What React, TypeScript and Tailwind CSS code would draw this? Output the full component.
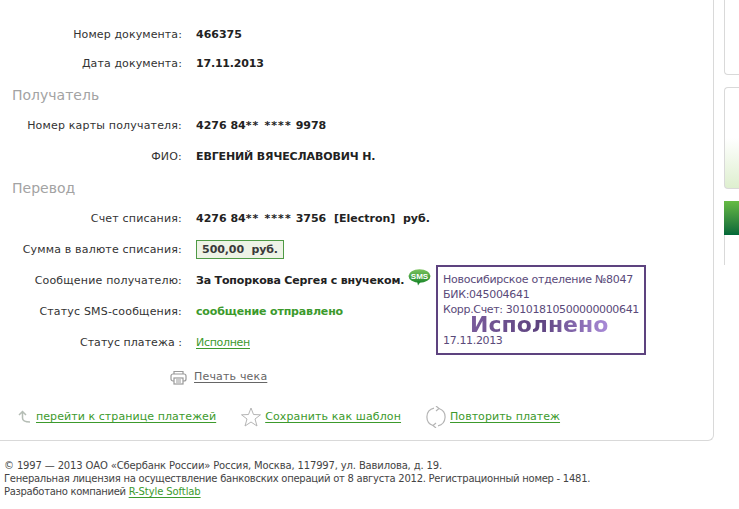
import React from "react";

function Row({ label, children, h = "h-[31px]", track = "tracking-[0.18px]" }: { label: string; children: React.ReactNode; h?: string; track?: string }) {
  return (
    <div className={`flex items-center ${h}`}>
      <div className={`w-[182px] shrink-0 whitespace-nowrap text-right ${track} text-[#333333]`}>{label}</div>
      <div className="ml-[14px] flex items-center whitespace-nowrap">{children}</div>
    </div>
  );
}

function Heading({ children }: { children: React.ReactNode }) {
  return <div className="h-[31px] pl-[12px] flex items-center text-[14px] text-[#a3a3a3]">{children}</div>;
}

function Card({ end }: { end: string }) {
  return (
    <b className="text-[#222222] whitespace-pre">
      4276 84<span className="tracking-[1.1px]">** ****</span> {end}
    </b>
  );
}

export default function App() {
  return (
    <div className="relative w-[739px] h-[509px] overflow-hidden bg-white font-['DejaVu_Sans',sans-serif] text-[11px] leading-[14px] text-[#333333]">
      <div className="flex h-[441px]">
        <div className="relative w-[714px] h-[441px] border-r border-b border-[#d9d9d9] rounded-br-[6px] pt-[20px]">
          <Row label="Номер документа:" h="h-[29px]" track="tracking-[0.1px]"><b className="text-[#222222]">466375</b></Row>
          <Row label="Дата документа:" h="h-[30px]" track="tracking-[0.1px]"><b className="text-[#222222] tracking-[-0.2px]">17.11.2013</b></Row>
          <Heading>Получатель</Heading>
          <Row label="Номер карты получателя:"><Card end="9978" /></Row>
          <Row label="ФИО:"><b className="text-[#222222] tracking-[-0.13px]">ЕВГЕНИЙ ВЯЧЕСЛАВОВИЧ Н.</b></Row>
          <Heading>Перевод</Heading>
          <Row label="Счет списания:"><Card end="3756  [Electron]  руб." /></Row>
          <Row label="Сумма в валюте списания:">
            <b className="border border-[#4f9a45] bg-[#eef3e6] h-[19px] w-[88px] flex items-center justify-center whitespace-pre text-[#3a3a3a] tracking-[-0.1px]">500,00  руб.</b>
          </Row>
          <Row label="Сообщение получателю:">
            <b className="text-[#222222] tracking-[-0.16px]">За Топоркова Сергея с внучеком.</b>
            <svg width="23" height="17" viewBox="0 0 23 17" className="ml-[4px] -mt-[7px]">
              <defs>
                <linearGradient id="sms" x1="0" y1="0" x2="0" y2="1">
                  <stop offset="0" stopColor="#7cc35e" />
                  <stop offset="1" stopColor="#1f8a2c" />
                </linearGradient>
              </defs>
              <ellipse cx="11.5" cy="7" rx="11" ry="6.8" fill="url(#sms)" />
              <path d="M9 12 L13 12 L10 16.5 Z" fill="#1f8a2c" />
              <text x="11.5" y="10" textAnchor="middle" fontSize="8" fontWeight="700" fill="#ffffff" fontFamily="Liberation Sans">SMS</text>
            </svg>
          </Row>
          <Row label="Статус SMS-сообщения:"><b className="text-[#3c9a2c] tracking-[-0.15px]">сообщение отправлено</b></Row>
          <Row label="Статус платежа :" track="tracking-[0.05px]"><span className="text-[#3c9a2c] underline underline-offset-2 tracking-[-0.3px]">Исполнен</span></Row>
          <div className="h-[38px] flex items-center pl-[170px] text-[#666666] tracking-[0.18px]">
            <svg width="17" height="15" viewBox="0 0 17 15" fill="none" stroke="#9a9a9a" strokeWidth="1.2">
              <path d="M4 4V1.5h9V4" />
              <rect x="1" y="4" width="15" height="7" rx="2" />
              <rect x="4" y="8" width="9" height="6" fill="#fff" />
              <path d="M6 10h5M6 12h5" />
            </svg>
            <span className="ml-[7px] underline underline-offset-2">Печать чека</span>
          </div>
          <div className="flex items-center h-[40px] mt-[1px] text-[#3c9a2c]">
            <svg width="14" height="14" viewBox="0 0 14 14" fill="none" stroke="#b5bdb5" strokeWidth="1.5" className="ml-[18px]">
              <path d="M1 5 L4.5 1.5 L8 5 M4.5 2 V8 Q4.5 12 12 12" />
            </svg>
            <span className="ml-[4px] underline underline-offset-2 tracking-[0.07px]">перейти к странице платежей</span>
            <svg width="20" height="20" viewBox="0 0 20 20" fill="none" stroke="#b5b5b5" className="ml-[25px]">
              <path d="M10 1 L12.5 7.5 L19.5 7.8 L14 12 L16 19 L10 15 L4 19 L6 12 L0.5 7.8 L7.5 7.5 Z" />
            </svg>
            <span className="ml-[4px] underline underline-offset-2 tracking-[0.12px]">Сохранить как шаблон</span>
            <svg width="20" height="22" viewBox="0 0 20 22" fill="none" stroke="#b5b5b5" strokeWidth="1.2" className="ml-[25px]">
              <path d="M8 2.2 A9 9 0 0 0 7 19.5" />
              <path d="M12 19.8 A9 9 0 0 0 13 2.5" />
              <path d="M10 0 L13 2.5 L10 5 M10 17 L7 19.5 L10 22" />
            </svg>
            <span className="ml-[4px] underline underline-offset-2 tracking-[0.05px]">Повторить платеж</span>
          </div>
          <div className="absolute left-[436px] top-[265px] w-[210px] h-[90px] border-[2px] border-[#5d437f] px-[5px] pt-[5px] whitespace-nowrap text-[11px] leading-[15px] text-[#5a4a7a]">
            <div className="tracking-[-0.25px]">Новосибирское отделение №8047</div>
            <div className="tracking-[-0.3px]">БИК:045004641</div>
            <div className="tracking-[-0.34px]">Корр.Счет: 30101810500000000641</div>
            <div className="absolute left-[32px] top-[47px] text-[22px] leading-[22px] font-bold bg-gradient-to-r from-[#7a5c9c] via-[#5d437f] to-[#a98bd8] bg-clip-text text-transparent">Исполнено</div>
            <div className="absolute left-[5px] top-[66px] tracking-[-0.35px]">17.11.2013</div>
          </div>
        </div>
        <div className="flex-1 pl-[10px]">
          <div className="h-[75px] border-l border-b border-[#d9d9d9] rounded-bl-[4px]"></div>
          <div className="h-[102px] mt-[12px] border-l border-t border-b border-[#d9d9d9] rounded-l-[4px] bg-gradient-to-b from-white from-50% to-[#deefcf]"></div>
          <div className="h-[34px] mt-[12px] bg-gradient-to-b from-[#66bb44] to-[#006838]"></div>
          <div className="h-[30px] border-l border-[#d9d9d9]"></div>
        </div>
      </div>
      <div className="pl-[4px] pt-[18px] text-[10px] leading-[13px] text-[#444444] whitespace-nowrap">
        <div className="tracking-[-0.15px]">© 1997 — 2013 ОАО «Сбербанк России» Россия, Москва, 117997, ул. Вавилова, д. 19.</div>
        <div className="tracking-[-0.26px]">Генеральная лицензия на осуществление банковских операций от 8 августа 2012. Регистрационный номер - 1481.</div>
        <div className="tracking-[-0.3px]">Разработано компанией <span className="text-[#3c9a2c] underline underline-offset-2 tracking-[-0.1px]">R-Style Softlab</span></div>
      </div>
    </div>
  );
}
